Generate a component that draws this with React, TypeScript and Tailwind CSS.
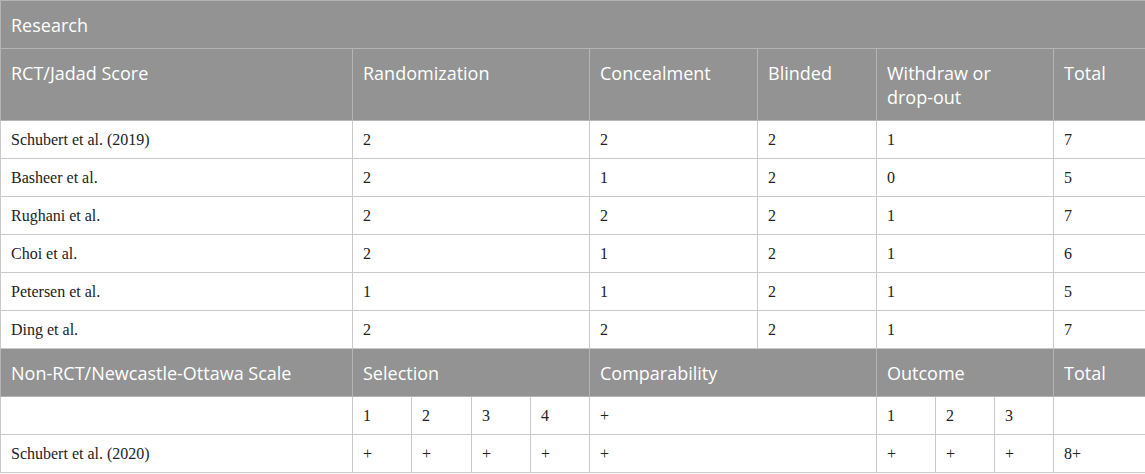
const widths = [352, 59, 60, 59, 59, 168, 119, 59, 59, 59, 92];

const rct = [
  ["Schubert et al. (2019)", "2", "2", "2", "1", "7"],
  ["Basheer et al.", "2", "1", "2", "0", "5"],
  ["Rughani et al.", "2", "2", "2", "1", "7"],
  ["Choi et al.", "2", "1", "2", "1", "6"],
  ["Petersen et al.", "1", "1", "2", "1", "5"],
  ["Ding et al.", "2", "2", "2", "1", "7"],
];

const th = "border border-[#b4b4b4] bg-[#939393] text-white text-[18px] leading-[24px] font-['Open_Sans',sans-serif] font-normal text-left align-top px-[10px] pt-3 pb-[11px]";
const td = "border border-[#c9c9c9] text-[#222] text-[16px] leading-[20px] font-['Liberation_Serif',serif] align-middle px-[10px] h-[38px]";

export default function App() {
  return (
    <div className="w-[1145px] h-[474px] bg-white overflow-hidden">
      <table className="table-fixed border-collapse w-[1145px]">
        <colgroup>
          {widths.map((w, i) => (
            <col key={i} style={{ width: w }} />
          ))}
        </colgroup>
        <tbody>
          <tr>
            <th colSpan={11} className={th}>
              Research
            </th>
          </tr>
          <tr>
            <th className={th}>RCT/Jadad Score</th>
            <th colSpan={4} className={th}>Randomization</th>
            <th className={th}>Concealment</th>
            <th className={th}>Blinded</th>
            <th colSpan={3} className={th}>
              Withdraw or
              <br />
              drop-out
            </th>
            <th className={th}>Total</th>
          </tr>
          {rct.map((r, i) => (
            <tr key={i}>
              <td className={td}>{r[0]}</td>
              <td colSpan={4} className={td}>{r[1]}</td>
              <td className={td}>{r[2]}</td>
              <td className={td}>{r[3]}</td>
              <td colSpan={3} className={td}>{r[4]}</td>
              <td className={td}>{r[5]}</td>
            </tr>
          ))}
          <tr>
            <th className={th}>Non-RCT/Newcastle-Ottawa Scale</th>
            <th colSpan={4} className={th}>Selection</th>
            <th colSpan={2} className={th}>Comparability</th>
            <th colSpan={3} className={th}>Outcome</th>
            <th className={th}>Total</th>
          </tr>
          <tr>
            <td className={td}></td>
            <td className={td}>1</td>
            <td className={td}>2</td>
            <td className={td}>3</td>
            <td className={td}>4</td>
            <td colSpan={2} className={td}>+</td>
            <td className={td}>1</td>
            <td className={td}>2</td>
            <td className={td}>3</td>
            <td className={td}></td>
          </tr>
          <tr>
            <td className={td}>Schubert et al. (2020)</td>
            <td className={td}>+</td>
            <td className={td}>+</td>
            <td className={td}>+</td>
            <td className={td}>+</td>
            <td colSpan={2} className={td}>+</td>
            <td className={td}>+</td>
            <td className={td}>+</td>
            <td className={td}>+</td>
            <td className={td}>8+</td>
          </tr>
        </tbody>
      </table>
    </div>
  );
}
